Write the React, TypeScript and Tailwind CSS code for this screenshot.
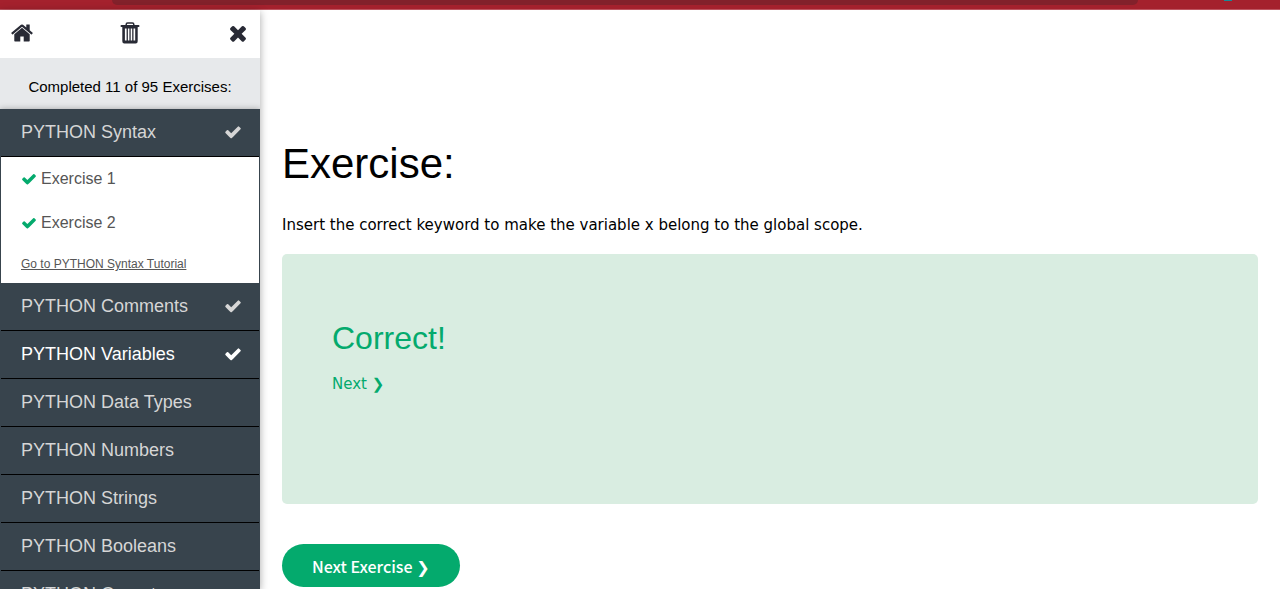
type IconProps = { className?: string };

function HomeIcon({ className }: IconProps) {
  return (
    <svg viewBox="0 0 1792 1792" fill="currentColor" aria-hidden="true" className={className}>
      <path d="M1472 992v480q0 26-19 45t-45 19h-384v-384h-256v384h-384q-26 0-45-19t-19-45v-480q0-1 .5-3t.5-3l575-474 575 474q1 2 1 6zm223-69l-62 74q-8 9-21 11h-3q-13 0-21-7l-692-577-692 577q-12 8-24 7-13-2-21-11l-62-74q-8-10-7-23.5t11-21.5l719-599q32-26 76-26t76 26l244 204v-195q0-14 9-23t23-9h192q14 0 23 9t9 23v408l219 182q10 8 11 21.5t-7 23.5z" />
    </svg>
  );
}

function TrashIcon({ className }: IconProps) {
  return (
    <svg viewBox="0 0 24 24" fill="none" aria-hidden="true" className={className}>
      <path d="M8.2 5V3.4Q8.2 2 9.6 2h4.800q1.400 0 1.400 1.400V5" stroke="currentColor" strokeWidth="1.5" />
      <path d="M3.400 5h17.200" stroke="currentColor" strokeWidth="1.800" strokeLinecap="round" />
      <path
        fillRule="evenodd"
        fill="currentColor"
        d="M4.300 5h15.400v15.200q0 2.200-2 2.200H6.300q-2 0-2-2.200zM6.900 7.500v12h1.700v-12zM9.900 7.500v12h1.500v-12zM12.700 7.500v12h1.500v-12zM15.500 7.500v12h1.700v-12z"
      />
    </svg>
  );
}

function CloseIcon({ className }: IconProps) {
  return (
    <svg viewBox="0 0 1792 1792" fill="currentColor" aria-hidden="true" className={className}>
      <path d="M1490 1322q0 40-28 68l-136 136q-28 28-68 28t-68-28l-294-294-294 294q-28 28-68 28t-68-28l-136-136q-28-28-28-68t28-68l294-294-294-294q-28-28-28-68t28-68l136-136q28-28 68-28t68 28l294 294 294-294q28-28 68-28t68 28l136 136q28 28 28 68t-28 68l-294 294 294 294q28 28 28 68z" />
    </svg>
  );
}

function CheckIcon({ className }: IconProps) {
  return (
    <svg viewBox="0 0 1792 1792" fill="currentColor" aria-hidden="true" className={className}>
      <path d="M1671 566q0 40-28 68l-724 724-136 136q-28 28-68 28t-68-28l-136-136-362-362q-28-28-28-68t28-68l136-136q28-28 68-28t68 28l294 295 656-657q28-28 68-28t68 28l136 136q28 28 28 68z" />
    </svg>
  );
}

type Chapter = { title: string; done?: boolean; active?: boolean; exercises?: string[] };

const chapters: Chapter[] = [
  { title: "PYTHON Syntax", done: true, exercises: ["Exercise 1", "Exercise 2"] },
  { title: "PYTHON Comments", done: true },
  { title: "PYTHON Variables", done: true, active: true },
  { title: "PYTHON Data Types" },
  { title: "PYTHON Numbers" },
  { title: "PYTHON Strings" },
  { title: "PYTHON Booleans" },
  { title: "PYTHON Operators" },
];

function ChapterItem({ chapter }: { chapter: Chapter }) {
  return (
    <li className="border-x border-[#38444d]">
      <button
        type="button"
        aria-expanded={Boolean(chapter.exercises)}
        className={`flex h-12 w-full items-center justify-between border-b border-black bg-[#38444d] pr-[17px] pb-px pl-5 text-left text-lg leading-6 ${
          chapter.active ? "text-white" : "text-[#d6d6d6]"
        }`}
      >
        {chapter.title}
        {chapter.done && <CheckIcon className="size-[18px]" />}
      </button>
      {chapter.exercises && (
        <div className="bg-white px-5 text-[#555]">
          <ul>
            {chapter.exercises.map((name) => (
              <li key={name}>
                <a href="#exercise" className="flex h-11 items-center gap-1 text-base">
                  <CheckIcon className="size-4 text-[#04aa6d]" />
                  {name}
                </a>
              </li>
            ))}
          </ul>
          <a href="#tutorial" className="flex h-[38px] items-center text-xs underline">
            Go to PYTHON Syntax Tutorial
          </a>
        </div>
      )}
    </li>
  );
}

export default function App() {
  return (
    <div className="flex h-screen flex-col overflow-hidden bg-white font-['Liberation_Sans',sans-serif] text-black">
      <header className="flex h-[10px] shrink-0 items-start border-b border-[#bd5560] bg-[#a4212d] pr-12 pl-[112px]">
        <div className="h-[5px] flex-1 rounded-b-xl bg-[#82212b]" />
        <div className="ml-[86px] h-px w-2 bg-[#168a97]" />
      </header>
      <div className="flex min-h-0 flex-1">
        <aside className="z-10 w-[260px] shrink-0 overflow-hidden shadow-[0_2px_8px_rgba(0,0,0,0.35)]">
          <div className="flex h-12 items-center justify-between bg-white px-[10px] pb-0.5 text-[#282a35]">
            <button type="button" aria-label="Home">
              <HomeIcon className="size-6" />
            </button>
            <button type="button" aria-label="Delete progress">
              <TrashIcon className="size-6" />
            </button>
            <button type="button" aria-label="Close menu">
              <CloseIcon className="size-6" />
            </button>
          </div>
          <p className="flex h-[51px] items-center justify-center bg-[#e7e9eb] pt-2 text-[15px]">
            Completed 11 of 95 Exercises:
          </p>
          <ul className="relative bg-[#38444d] shadow-[0_0_6px_rgba(0,0,0,0.3)]">
            {chapters.map((chapter) => (
              <ChapterItem key={chapter.title} chapter={chapter} />
            ))}
          </ul>
        </aside>
        <main className="min-w-0 flex-1 px-[22px] pt-[122px]">
          <h1 className="text-[42px] leading-[63px]">Exercise:</h1>
          <p className="mt-[18px] font-['DejaVu_Sans',sans-serif] text-[15px] leading-6">
            Insert the correct keyword to make the variable x belong to the global scope.
          </p>
          <section className="mt-[17px] min-h-[250px] rounded-[5px] bg-[#d9ede1] px-[50px] pt-[60px] text-[#04aa6d]">
            <h2 className="text-[32px] leading-[48px]">Correct!</h2>
            <a href="#next" className="mt-[10px] block font-['DejaVu_Sans',sans-serif] text-[15px] leading-6">
              Next ❯
            </a>
          </section>
          <button
            type="button"
            className="mt-10 h-[43px] rounded-full bg-[#04aa6d] px-[30px] font-['Noto_Sans_CJK_SC','DejaVu_Sans',sans-serif] text-base font-medium text-white"
          >
            Next Exercise ❯
          </button>
        </main>
      </div>
    </div>
  );
}
